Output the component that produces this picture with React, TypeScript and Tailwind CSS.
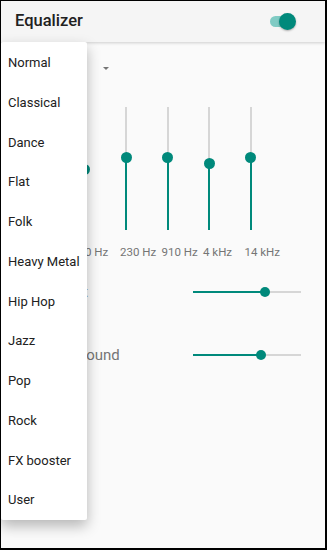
const presets = [
  'Normal',
  'Classical',
  'Dance',
  'Flat',
  'Folk',
  'Heavy Metal',
  'Hip Hop',
  'Jazz',
  'Pop',
  'Rock',
  'FX booster',
  'User',
];

const bands = [
  { label: '60 Hz', thumb: 62 },
  { label: '230 Hz', thumb: 50 },
  { label: '910 Hz', thumb: 50 },
  { label: '4 kHz', thumb: 56 },
  { label: '14 kHz', thumb: 50 },
];

function VerticalBand({ label, thumb }: { label: string; thumb: number }) {
  return (
    <div className="w-[41.5px] flex flex-col">
      <div className="relative h-[123px] w-[14px]">
        <div className="absolute left-[5px] top-0 w-[2px] bg-[#d6d6d6]" style={{ height: thumb }} />
        <div
          className="absolute left-[5px] bottom-0 w-[2px] bg-[#00897b]"
          style={{ top: thumb }}
        />
        <div
          className="absolute left-[0.5px] w-[11px] h-[11px] rounded-full bg-[#00897b]"
          style={{ top: thumb - 5.5 }}
        />
      </div>
      <span className="mt-[15px] text-[11.5px] leading-[14px] text-[#757575] whitespace-nowrap">
        {label}
      </span>
    </div>
  );
}

function HorizontalSlider({ value }: { value: number }) {
  return (
    <div className="relative w-[108px] h-[10px]">
      <div className="absolute left-0 right-0 top-[4px] h-[2px] bg-[#d6d6d6]" />
      <div className="absolute left-0 top-[4px] h-[2px] bg-[#00897b]" style={{ width: `${value}%` }} />
      <div
        className="absolute top-0 w-[10px] h-[10px] rounded-full bg-[#00897b]"
        style={{ left: `calc(${value}% - 5px)` }}
      />
    </div>
  );
}

export default function App() {
  return (
    <div
      className="relative w-[327px] h-[550px] overflow-hidden bg-[#fafafa] border-l border-t border-r-2 border-b-2 border-black"
      style={{ fontFamily: 'Roboto, "Noto Sans", sans-serif' }}
    >
      <header className="relative z-10 h-[41px] bg-[#f5f5f5] flex items-center justify-between pl-[14px] pr-[29px] shadow-[0_1px_3px_rgba(0,0,0,0.18)]">
        <h1 className="text-[16.5px] font-medium text-[#212121] leading-none">Equalizer</h1>
        <div className="relative w-[26px] h-[17px]">
          <div className="absolute left-0 top-[3px] w-[22px] h-[11px] rounded-full bg-[#80cbc4]" />
          <div className="absolute right-0 top-0 w-[17px] h-[17px] rounded-full bg-[#00897b] shadow-[0_1px_2px_rgba(0,0,0,0.3)]" />
        </div>
      </header>

      <main>
        <div className="h-[52px] flex items-center pl-[15px]">
          <span className="w-[87px] text-[15px] text-[#212121]">Normal</span>
          <span className="w-0 h-0 border-l-[3.5px] border-r-[3.5px] border-t-[3.5px] border-l-transparent border-r-transparent border-t-[#757575]" />
        </div>

        <div className="mt-[13px] pl-[77.5px] flex">
          {bands.map((b) => (
            <VerticalBand key={b.label} label={b.label} thumb={b.thumb} />
          ))}
        </div>

        <div className="mt-[13px] h-[40px] flex items-center justify-between pl-[12px] pr-[24px]">
          <span className="text-[15px] text-[#757575]">Bass boost</span>
          <HorizontalSlider value={66.7} />
        </div>
        <div className="mt-[23px] h-[40px] flex items-center justify-between pl-[13px] pr-[24px]">
          <span className="text-[15px] text-[#757575]">Surround sound</span>
          <HorizontalSlider value={62.7} />
        </div>
      </main>

      <div className="absolute z-20 left-0 top-[41px] w-[86px] pt-[1px] bg-white rounded-[2px] shadow-[0_6px_14px_rgba(0,0,0,0.28)]">
        {presets.map((p) => (
          <div key={p} className="h-[39.75px] flex items-center pl-[7px] text-[13px] text-[#212121] whitespace-nowrap">
            {p}
          </div>
        ))}
      </div>
    </div>
  );
}
